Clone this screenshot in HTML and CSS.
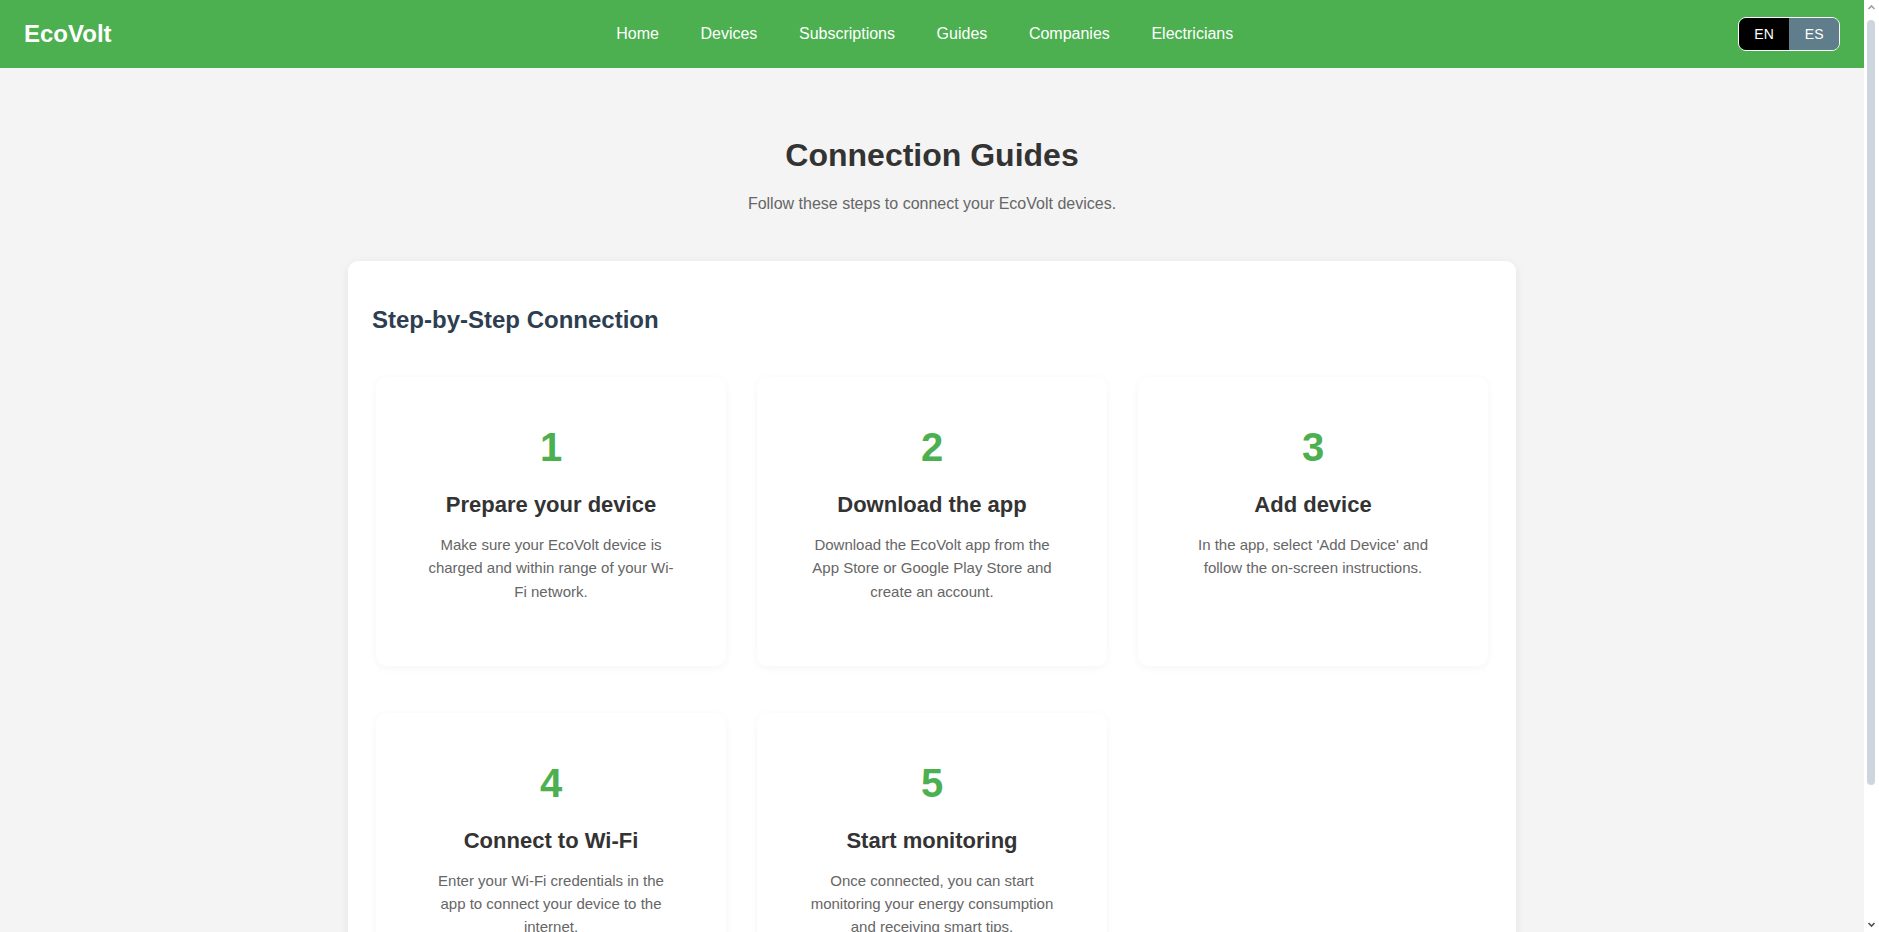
FILE: index.html
```html
<!DOCTYPE html>
<html lang="en">
<head>
<meta charset="utf-8">
<title>EcoVolt - Connection Guides</title>
<link rel="stylesheet" href="styles.css">
</head>
<body>
<div class="site">
  <header class="navbar">
    <a class="logo" href="#">EcoVolt</a>
    <nav class="nav-links">
      <a href="#">Home</a>
      <a href="#">Devices</a>
      <a href="#">Subscriptions</a>
      <a href="#">Guides</a>
      <a href="#">Companies</a>
      <a href="#">Electricians</a>
    </nav>
    <div class="lang-toggle">
      <button class="lang-btn active">EN</button>
      <button class="lang-btn">ES</button>
    </div>
  </header>
  <main class="page">
    <section class="hero">
      <h1>Connection Guides</h1>
      <p>Follow these steps to connect your EcoVolt devices.</p>
    </section>
    <section class="panel">
      <h2>Step-by-Step Connection</h2>
      <div class="steps">
        <article class="step-card">
          <div class="step-number">1</div>
          <h3>Prepare your device</h3>
          <p>Make sure your EcoVolt device is charged and within range of your Wi-Fi network.</p>
        </article>
        <article class="step-card">
          <div class="step-number">2</div>
          <h3>Download the app</h3>
          <p>Download the EcoVolt app from the App Store or Google Play Store and create an account.</p>
        </article>
        <article class="step-card">
          <div class="step-number">3</div>
          <h3>Add device</h3>
          <p>In the app, select 'Add Device' and follow the on-screen instructions.</p>
        </article>
        <article class="step-card">
          <div class="step-number">4</div>
          <h3>Connect to Wi-Fi</h3>
          <p>Enter your Wi-Fi credentials in the app to connect your device to the internet.</p>
        </article>
        <article class="step-card">
          <div class="step-number">5</div>
          <h3>Start monitoring</h3>
          <p>Once connected, you can start monitoring your energy consumption and receiving smart tips.</p>
        </article>
      </div>
    </section>
  </main>
</div>
<div class="fake-scrollbar" aria-hidden="true">
  <svg class="sb-arrow" width="15" height="15" viewBox="0 0 15 15"><path d="M4.5 9 L7.5 6 L10.5 9" fill="none" stroke="#a0a0a0" stroke-width="1.6"/></svg>
  <div class="sb-track"><div class="sb-thumb"></div></div>
  <svg class="sb-arrow" width="15" height="15" viewBox="0 0 15 15"><path d="M4.5 6 L7.5 9 L10.5 6" fill="none" stroke="#505050" stroke-width="1.6"/></svg>
</div>
</body>
</html>
```
FILE: styles.css
```css
body {
  margin: 0;
  background: #f4f4f4;
  font-family: "Liberation Sans", Arial, sans-serif;
  color: #333;
}

.site {
  margin-right: 15px;
}

.navbar {
  height: 68px;
  background: #4caf50;
  display: flex;
  align-items: center;
  justify-content: space-between;
  padding: 0 24px;
  box-sizing: border-box;
}

.logo {
  color: #fff;
  font-size: 24px;
  font-weight: bold;
  text-decoration: none;
}

.nav-links {
  display: flex;
  gap: 41.6px;
}

.nav-links a {
  color: #fff;
  font-size: 16px;
  text-decoration: none;
}

.lang-toggle {
  display: flex;
  border: 1px solid #fff;
  border-radius: 8px;
  overflow: hidden;
}

.lang-btn {
  border: none;
  margin: 0;
  background: #607d8b;
  color: #fff;
  font-family: "Liberation Sans", Arial, sans-serif;
  font-size: 14px;
  line-height: 16px;
  padding: 8px 15.5px;
}

.lang-btn.active {
  background: #000;
}

.page {
  padding: 48px 0 64px;
}

.hero {
  text-align: center;
}

.hero h1 {
  margin: 21px 0 21px;
  font-size: 32px;
  color: #333;
}

.hero p {
  margin: 0;
  font-size: 16px;
  color: #666;
}

.panel {
  width: 1168px;
  box-sizing: border-box;
  margin: 48px auto 0;
  background: #fff;
  border-radius: 10px;
  padding: 24px;
  box-shadow: 0 2px 10px rgba(0, 0, 0, 0.07);
}

.panel h2 {
  margin: 21px 0 43px;
  font-size: 24px;
  color: #2c3e50;
}

.steps {
  display: grid;
  grid-template-columns: repeat(3, 1fr);
  column-gap: 31px;
  row-gap: 47px;
  padding: 0 4px;
}

.step-card {
  background: #fff;
  border-radius: 10px;
  padding: 48px 50px;
  text-align: center;
  box-shadow: 0 2px 8px rgba(0, 0, 0, 0.045);
}

.step-number {
  font-size: 40px;
  font-weight: bold;
  color: #4caf50;
}

.step-card h3 {
  margin: 22px 0 15px;
  font-size: 22px;
  color: #333;
}

.step-card p {
  margin: 15px 0;
  font-size: 15px;
  line-height: 1.55;
  color: #666;
}

.fake-scrollbar {
  position: fixed;
  top: 0;
  right: 0;
  width: 15px;
  height: 100vh;
  background: #fff;
  display: flex;
  flex-direction: column;
}

.sb-arrow {
  display: block;
  flex: none;
}

.sb-track {
  flex: 1;
  padding: 5px 0 0 3px;
}

.sb-thumb {
  width: 8px;
  height: 765px;
  border-radius: 4px;
  background: #cdd6df;
}
```
